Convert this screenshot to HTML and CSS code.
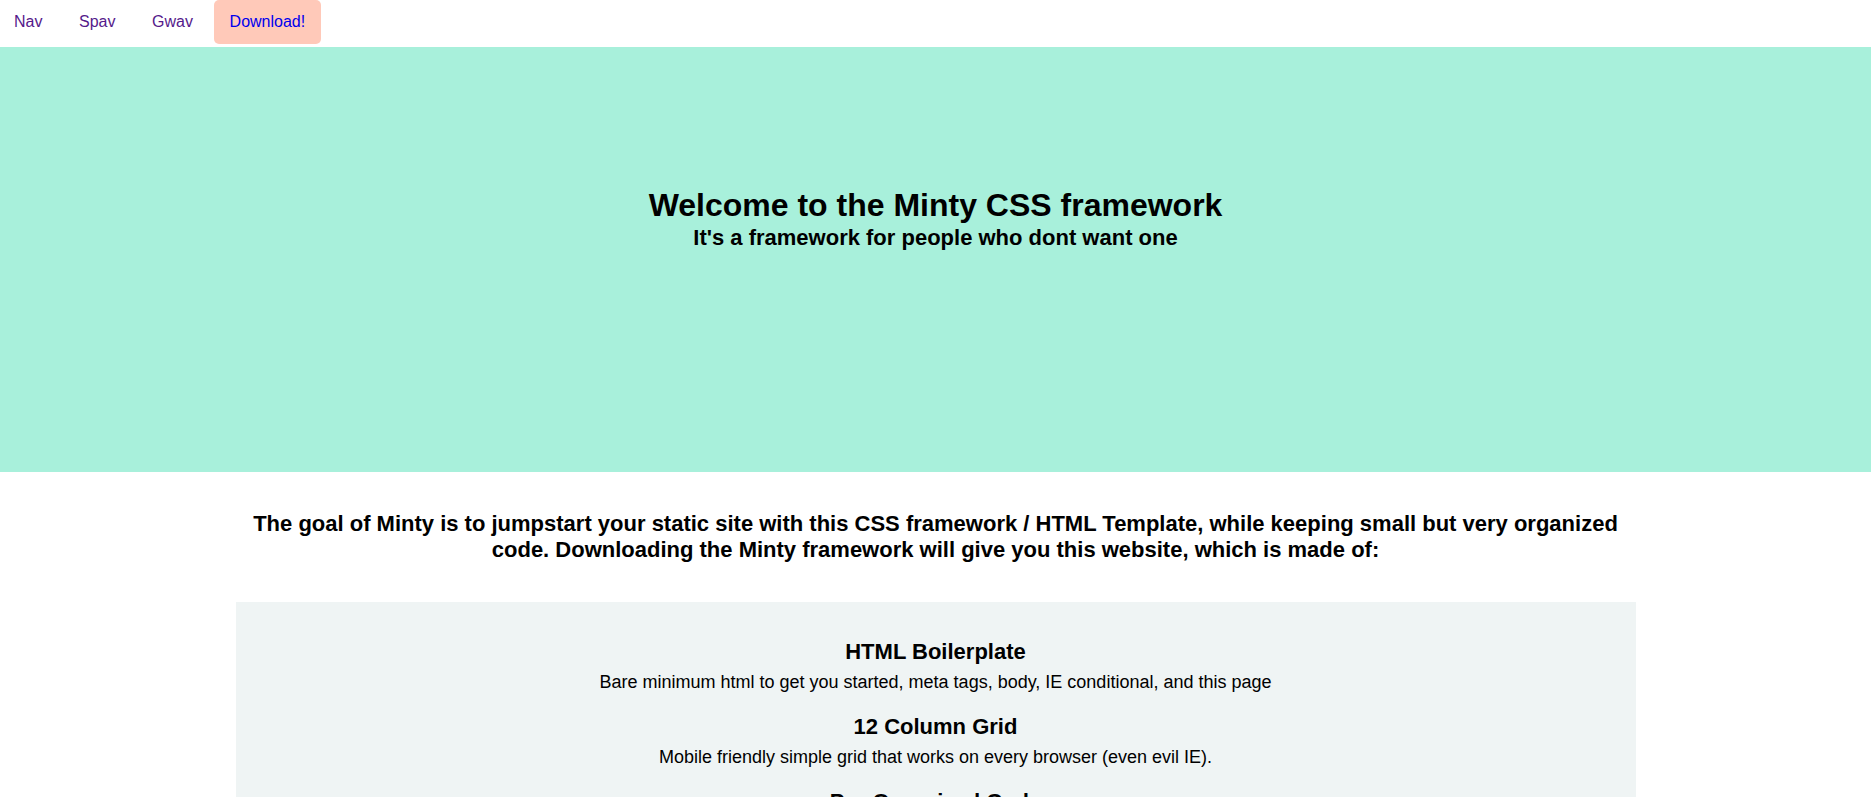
FILE: index.html
```html
<!DOCTYPE html>
<html lang="en">
<head>
<meta charset="utf-8">
<title>Minty</title>
<link rel="stylesheet" href="styles.css">
</head>
<body>
<nav class="topnav">
  <a class="nav-link visited" href="#">Nav</a>
  <a class="nav-link visited" href="#">Spav</a>
  <a class="nav-link visited" href="#">Gwav</a>
  <a class="nav-link download" href="#">Download!</a>
</nav>
<header class="hero">
  <h1 class="hero-title">Welcome to the Minty CSS framework</h1>
  <h2 class="hero-sub">It's a framework for people who dont want one</h2>
</header>
<main class="content">
  <p class="intro">The goal of Minty is to jumpstart your static site with this CSS framework / HTML Template, while keeping small but very organized code. Downloading the Minty framework will give you this website, which is made of:</p>
  <section class="features">
    <div class="feature">
      <h3 class="feature-title">HTML Boilerplate</h3>
      <p class="feature-text">Bare minimum html to get you started, meta tags, body, IE conditional, and this page</p>
    </div>
    <div class="feature">
      <h3 class="feature-title">12 Column Grid</h3>
      <p class="feature-text">Mobile friendly simple grid that works on every browser (even evil IE).</p>
    </div>
    <div class="feature">
      <h3 class="feature-title">Pre-Organized Code</h3>
      <p class="feature-text">Styles split into clear sections so you always know where things go.</p>
    </div>
  </section>
</main>
</body>
</html>
```
FILE: styles.css
```css
html, body {
  margin: 0;
  padding: 0;
}
body {
  font-family: "Liberation Sans", Arial, sans-serif;
  color: #000;
  background: #fff;
}
.topnav {
  display: flex;
  align-items: flex-start;
  gap: 4.6px;
  height: 47px;
}
.nav-link {
  display: block;
  height: 44px;
  line-height: 44px;
  padding: 0 16px;
  font-size: 16px;
  text-decoration: none;
  border-radius: 5px;
}
.nav-link:first-child {
  padding-left: 14px;
}
.nav-link.visited {
  color: #551a8b;
}
.nav-link.download {
  color: #0000ee;
  background: #ffc9b9;
}
.hero {
  background: #a8f0db;
  padding: 140px 0 222px;
  text-align: center;
}
.hero-title {
  margin: 0;
  font-size: 32px;
  font-weight: bold;
  line-height: normal;
}
.hero-sub {
  margin: 1px 0 -1px;
  font-size: 22px;
  font-weight: bold;
  line-height: normal;
}
.content {
  width: 1400px;
  margin: 0 auto;
  padding-top: 39px;
}
.intro {
  margin: 0 0 39px;
  font-size: 22px;
  font-weight: bold;
  line-height: normal;
  text-align: center;
}
.features {
  background: #eff4f4;
  padding: 37px 0 40px;
  display: flex;
  flex-direction: column;
  gap: 21px;
  text-align: center;
}
.feature-title {
  margin: 0 0 7px;
  font-size: 22px;
  font-weight: bold;
  line-height: normal;
}
.feature-text {
  margin: 0;
  font-size: 18px;
  line-height: normal;
}
```
